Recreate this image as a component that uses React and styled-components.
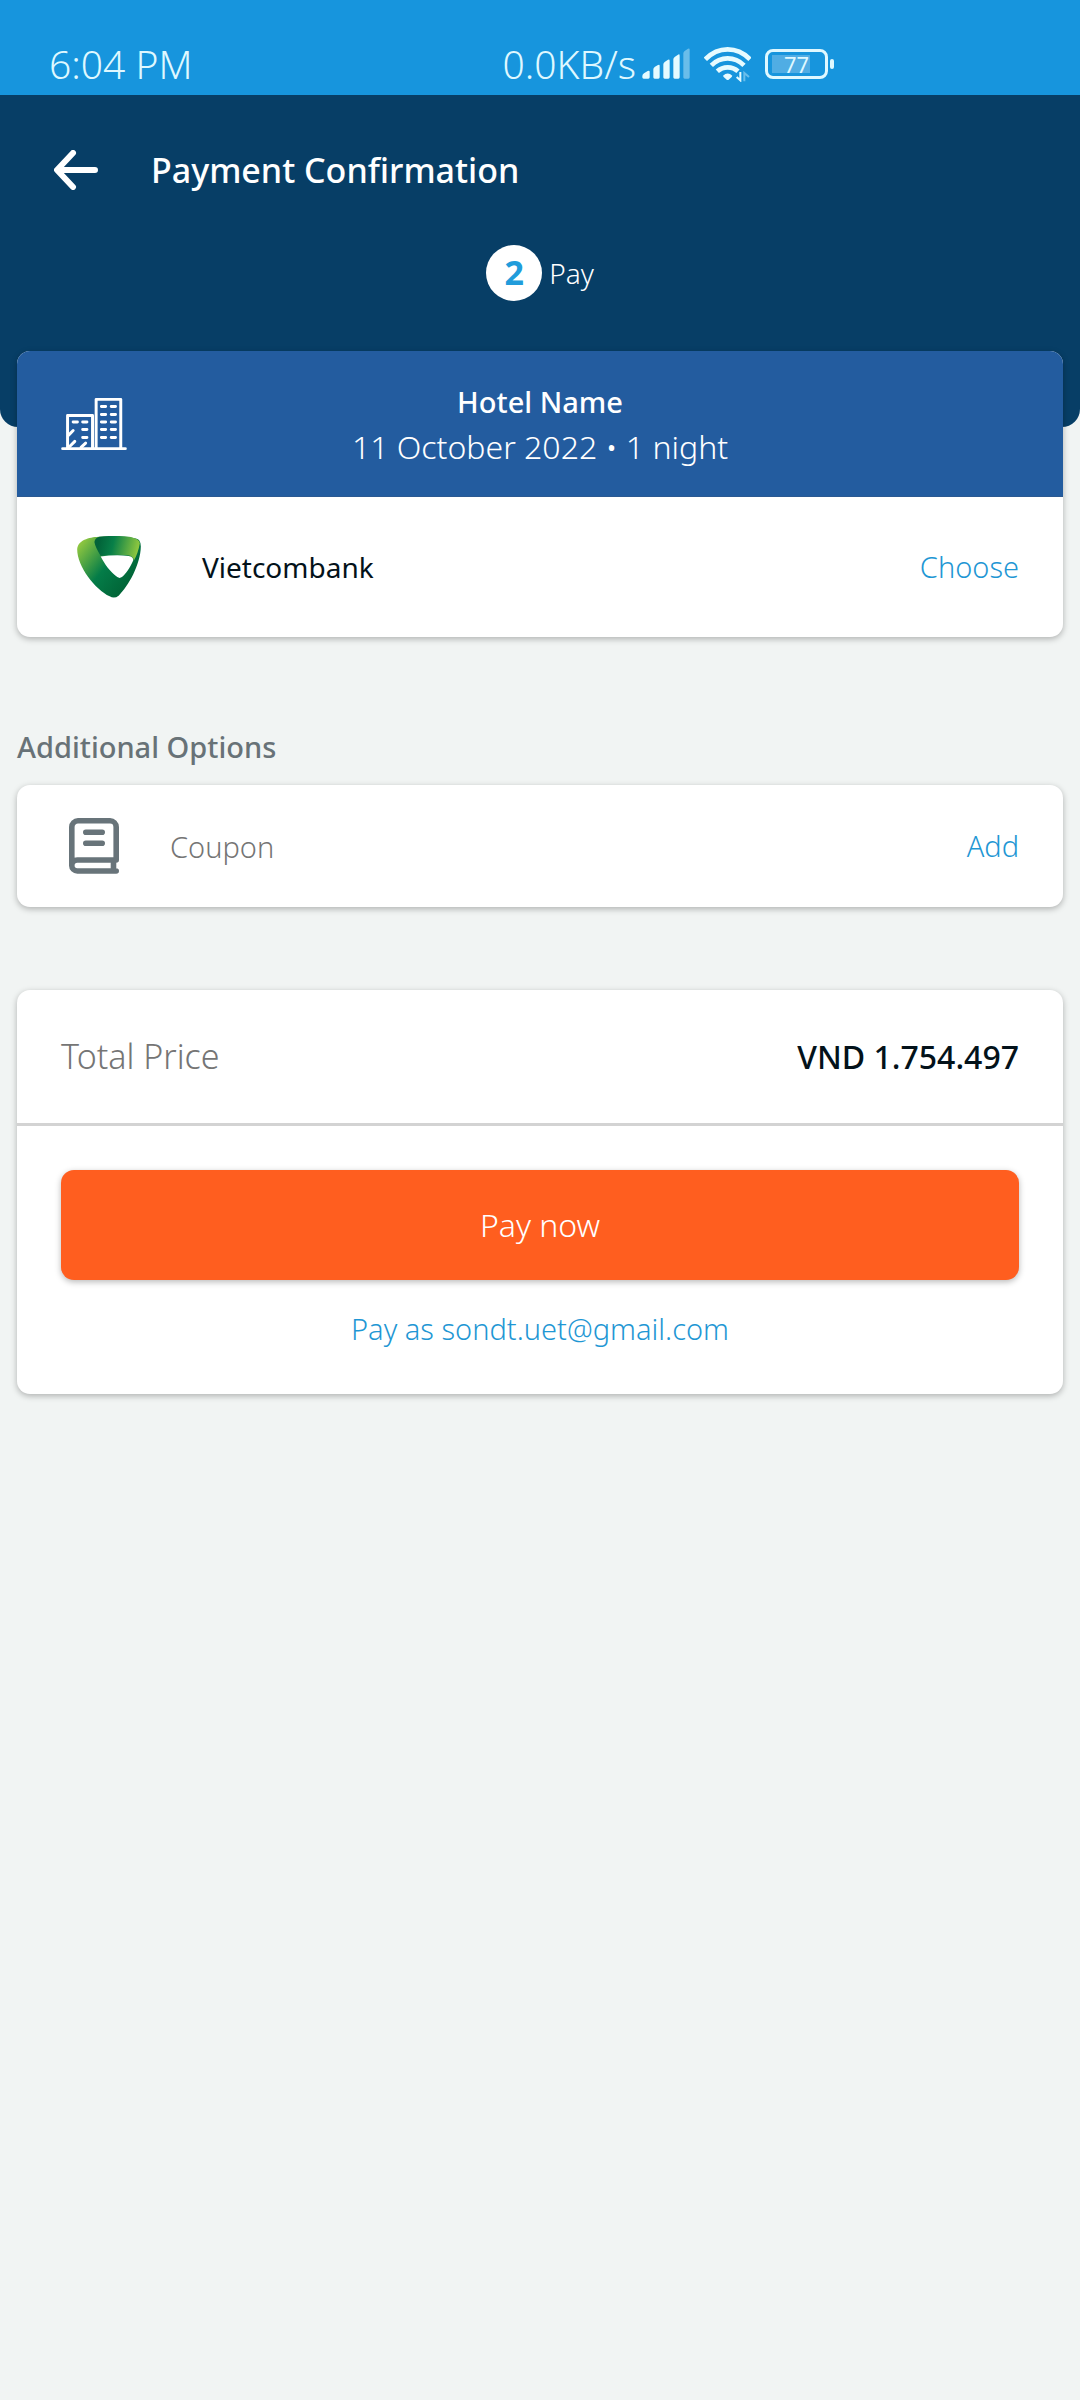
import React from "react";
import styled, { createGlobalStyle } from "styled-components";

const GlobalStyle = createGlobalStyle`
  *, *::before, *::after { box-sizing: border-box; }
  body {
    margin: 0;
    background: #f1f4f3;
    color: #03121a;
    font-family: "Noto Sans", "Open Sans", sans-serif;
    font-size: 32px;
    line-height: 45px;
  }
  h1, h2, p { margin: 0; font: inherit; }
  svg { display: block; flex: none; }
`;

const Screen = styled.div`
  min-height: 100vh;
`;

const StatusBar = styled.div`
  display: flex;
  align-items: center;
  justify-content: space-between;
  height: 95px;
  padding: 32px 246px 0 49px;
  background: #1795dd;
  color: #dff8ff;
  font-size: 39px;
  font-weight: 300;
  line-height: 60px;
`;

const StatusGroup = styled.div`
  display: flex;
  align-items: center;
`;

const StatusIcons = styled.div`
  display: flex;
  align-items: center;
  gap: 14px;
  margin-left: 6px;
`;

const Battery = styled.div`
  display: flex;
  align-items: center;
  gap: 2px;
`;

const BatteryShell = styled.div`
  width: 63px;
  height: 30px;
  padding: 3px 4px;
  border: 3px solid #dff8ff;
  border-radius: 8px;
`;

const BatteryLevel = styled.div`
  background: linear-gradient(to right, #50ade4 78%, transparent 78%);
  font-size: 22px;
  font-weight: 400;
  line-height: 18px;
  text-align: center;
`;

const BatteryTip = styled.div`
  width: 4px;
  height: 10px;
  border-radius: 2px;
  background: #dff8ff;
`;

const Header = styled.header`
  padding: 47px 48px 126px;
  border-radius: 0 0 18px 18px;
  background: #073e66;
  color: #fff;
`;

const TitleRow = styled.div`
  display: flex;
  align-items: center;
  gap: 47px;
  height: 56px;
`;

const BackButton = styled.button`
  display: flex;
  padding: 0 6px;
  border: 0;
  background: none;
  color: inherit;
  cursor: pointer;
`;

const Title = styled.h1`
  font-size: 34px;
  font-weight: 500;
`;

const Step = styled.div`
  display: flex;
  align-items: center;
  justify-content: center;
  gap: 7px;
  margin-top: 47px;
  font-size: 28px;
  font-weight: 300;
`;

const StepNumber = styled.span`
  width: 56px;
  height: 56px;
  border-radius: 50%;
  background: #fff;
  color: #219cdb;
  font-size: 34px;
  font-weight: 700;
  line-height: 54px;
  text-align: center;
`;

const Content = styled.main`
  margin-top: -76px;
  padding: 0 17px;
`;

const Card = styled.section`
  overflow: hidden;
  border-radius: 13px;
  background: #fff;
  box-shadow: 0 2px 6px rgba(0, 0, 0, 0.28);
`;

const HotelBanner = styled.div`
  display: grid;
  grid-template-columns: 1fr auto 1fr;
  align-items: center;
  height: 146px;
  padding: 0 44px;
  border-bottom: 1px solid #2b5991;
  background: #235c9f;
  color: #fff;
  text-align: center;
`;

const HotelName = styled.h2`
  font-size: 29px;
  font-weight: 500;
`;

const StayDates = styled.p`
  font-weight: 300;
`;

const Row = styled.div`
  display: flex;
  align-items: center;
  height: ${(p) => p.$height}px;
  padding: 0 44px 0 ${(p) => p.$inset}px;
`;

const RowLabel = styled.span`
  flex: 1;
  margin-left: ${(p) => p.$gap || 0}px;
  color: ${(p) => (p.$strong ? "#03121a" : "#757575")};
  font-size: ${(p) => p.$size}px;
  font-weight: ${(p) => (p.$strong ? 400 : 300)};
`;

const TextButton = styled.button`
  padding: 0;
  border: 0;
  background: none;
  color: #1f97d4;
  font: inherit;
  font-size: 29px;
  font-weight: 300;
  line-height: 40px;
  cursor: pointer;
`;

const SectionTitle = styled.h2`
  margin: 90px 0 18px;
  color: #687277;
  font-size: 29px;
  font-weight: 500;
  line-height: 40px;
`;

const PaymentCard = styled(Card)`
  margin-top: 83px;
`;

const Price = styled.span`
  font-weight: 500;
`;

const Actions = styled.div`
  display: flex;
  flex-direction: column;
  align-items: center;
  gap: 29px;
  padding: 44px 44px 45px;
  border-top: 3px solid #d3d3d3;
`;

const PayButton = styled.button`
  width: 100%;
  height: 110px;
  padding: 0 0 2px;
  border: 0;
  border-radius: 13px;
  background: #ff5e1f;
  box-shadow: 0 2px 6px rgba(0, 0, 0, 0.28);
  color: #fff;
  font: inherit;
  font-weight: 300;
  cursor: pointer;
`;

const SignalIcon = () => (
  <svg width="48" height="31" viewBox="39 58 144 93" fill="#e6fbff" aria-hidden="true">
    <path d="M40 142q0-5 5-8l11-7q6-3 6 2v17q0 4-4 4H44q-4 0-4-4z" />
    <path d="M73 122q0-5 5-8l9-5q5-3 5 2v35q0 4-4 4H77q-4 0-4-4z" />
    <path d="M103 107q0-5 5-8l9-6q5-2 5 3v50q0 4-4 4h-11q-4 0-4-4z" />
    <path d="M133 92q0-5 5-8l9-6q5-3 5 3v65q0 4-4 4h-11q-4 0-4-4z" />
    <path opacity=".4" d="M163 74q0-5 5-8l9-6q5-2 5 3v83q0 4-4 4h-11q-4 0-4-4z" />
  </svg>
);

const WifiIcon = () => (
  <svg width="47" height="36" viewBox="220 50 141 108" fill="none" stroke="#e6fbff" strokeWidth="14" aria-hidden="true">
    <path d="M224 90Q253 60 291 60T358 90" />
    <path d="M242 108Q263 87 291 87T340 108" />
    <path d="M260 126Q273 114 291 114T322 126" />
    <path fill="#e6fbff" stroke="none" d="M277 139q14-13 28 0l-2 4-9 8q-3 2-6 0l-9-8z" />
    <path strokeWidth="6" d="M329 128v25l-11-10" />
    <path strokeWidth="6" opacity=".4" d="M341 156v-25l14 12" />
  </svg>
);

const BackIcon = () => (
  <svg width="44" height="40" viewBox="0 0 44 40" fill="none" stroke="currentColor" strokeWidth="6" strokeLinecap="round" strokeLinejoin="round" aria-hidden="true">
    <path d="M41 20H4M19 3L3 20l16 17" />
  </svg>
);

const HotelIcon = () => (
  <svg width="66" height="54" viewBox="61 51 201 162" fill="none" stroke="#fff" strokeWidth="9" strokeLinecap="round" strokeLinejoin="round" aria-hidden="true">
    <path d="M66 207H257M81 205V106H157V205M168 205V57H243V205" />
    <path d="M184 79h13M214 79h13M184 103h13M214 103h13M184 126h13M214 126h13M184 149h13M214 149h13M184 173h13M214 173h13" />
    <path d="M98 126h13M127 126h13M127 149h13M127 173h13M85 165l13-13M85 203l18-18M122 203l14-13" />
  </svg>
);

const VietcombankLogo = () => (
  <svg width="64" height="62" viewBox="110 468 192 187" role="img" aria-label="Vietcombank">
    <defs>
      <linearGradient id="band" gradientUnits="userSpaceOnUse" x1="118" y1="495" x2="262" y2="610">
        <stop offset="0" stopColor="#8cc540" />
        <stop offset=".55" stopColor="#047c48" />
        <stop offset="1" stopColor="#016638" />
      </linearGradient>
      <linearGradient id="fold" gradientUnits="userSpaceOnUse" x1="172" y1="500" x2="292" y2="528">
        <stop offset="0" stopColor="#026339" />
        <stop offset=".35" stopColor="#087f48" />
        <stop offset="1" stopColor="#94ca3f" />
      </linearGradient>
    </defs>
    <path fill="url(#band)" d="M175 470C145 472 112 480 110 508C110 560 165 630 208 650Q222 658 235 648C264 620 301 555 302 500Q302 488 297 481Q285 468 175 470Z" />
    <path fill="url(#fold)" d="M177 470Q225 465 272 471Q298 477 299 490Q294 520 281 542Q280 528 262 526Q225 522 181 528Q164 500 162 486Q164 473 177 470Z" />
    <path fill="#fff" d="M181 530Q225 523 265 528Q280 530 279 542C269 565 255 585 245 592Q238 597 231 592C210 577 192 552 181 530Z" />
  </svg>
);

const CouponIcon = () => (
  <svg width="50" height="56" viewBox="0 0 50 56" fill="none" stroke="#68747a" strokeWidth="5.6" strokeLinecap="round" strokeLinejoin="round" aria-hidden="true">
    <path d="M2.8 47.5V9A6.2 6.2 0 0 1 9 2.8H41A6.2 6.2 0 0 1 47.2 9V42H8.3A5.5 5.5 0 0 0 8.3 53H47.2M44.5 42V53M16.8 14.2H33.2M16.8 25.2H33.2" />
  </svg>
);

export default function App() {
  return (
    <Screen>
      <GlobalStyle />
      <StatusBar>
        <span>6:04 PM</span>
        <StatusGroup>
          <span>0.0KB/s</span>
          <StatusIcons>
            <SignalIcon />
            <WifiIcon />
            <Battery>
              <BatteryShell>
                <BatteryLevel>77</BatteryLevel>
              </BatteryShell>
              <BatteryTip />
            </Battery>
          </StatusIcons>
        </StatusGroup>
      </StatusBar>

      <Header>
        <TitleRow>
          <BackButton type="button" aria-label="Back">
            <BackIcon />
          </BackButton>
          <Title>Payment Confirmation</Title>
        </TitleRow>
        <Step>
          <StepNumber>2</StepNumber>
          <span>Pay</span>
        </Step>
      </Header>

      <Content>
        <Card>
          <HotelBanner>
            <HotelIcon />
            <div>
              <HotelName>Hotel Name</HotelName>
              <StayDates>11 October 2022 • 1 night</StayDates>
            </div>
          </HotelBanner>
          <Row $height={140} $inset={60}>
            <VietcombankLogo />
            <RowLabel $strong $size={28} $gap={61}>Vietcombank</RowLabel>
            <TextButton type="button">Choose</TextButton>
          </Row>
        </Card>

        <SectionTitle>Additional Options</SectionTitle>
        <Card>
          <Row $height={122} $inset={52}>
            <CouponIcon />
            <RowLabel $size={29} $gap={51}>Coupon</RowLabel>
            <TextButton type="button">Add</TextButton>
          </Row>
        </Card>

        <PaymentCard>
          <Row $height={133} $inset={44}>
            <RowLabel $size={34}>Total Price</RowLabel>
            <Price>VND 1.754.497</Price>
          </Row>
          <Actions>
            <PayButton type="button">Pay now</PayButton>
            <TextButton type="button">Pay as sondt.uet@gmail.com</TextButton>
          </Actions>
        </PaymentCard>
      </Content>
    </Screen>
  );
}
